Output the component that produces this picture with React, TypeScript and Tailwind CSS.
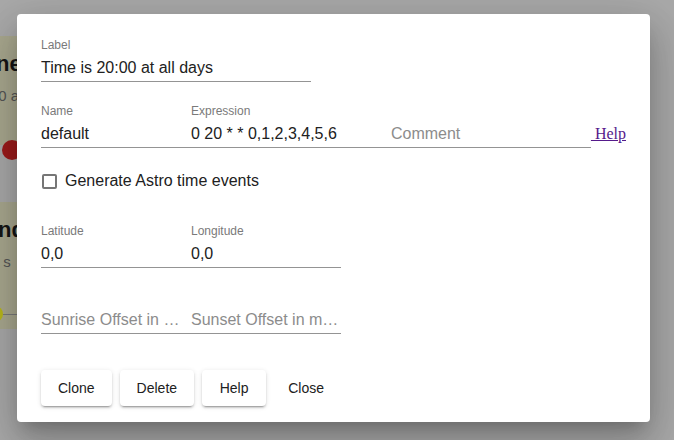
import React from "react";

const font = { fontFamily: '"Liberation Sans", Arial, Helvetica, sans-serif' };

function Field({
  label,
  value,
  placeholder,
  width,
}: {
  label?: string;
  value?: string;
  placeholder?: string;
  width: string;
}) {
  return (
    <div className={`flex flex-col ${width}`}>
      <div className="h-[14px] text-[12px] leading-[14px] text-[#7a7a7a] whitespace-nowrap">
        {label ?? ""}
      </div>
      <div className="h-[30px] pt-px border-b border-[#949494] text-[16px] leading-[29px] whitespace-nowrap overflow-hidden">
        {value !== undefined ? (
          <span className="text-[#212121]">{value}</span>
        ) : (
          <span className="text-[#8c8c8c]">{placeholder}</span>
        )}
      </div>
    </div>
  );
}

function Btn({ children, flat }: { children: React.ReactNode; flat?: boolean }) {
  return (
    <button
      className={`h-9 min-w-16 rounded-[4px] text-[14px] text-[#212121] ${
        flat
          ? "bg-transparent px-[14px]"
          : "bg-white px-[17px] shadow-[0px_3px_1px_-2px_rgba(0,0,0,0.2),0px_2px_2px_0px_rgba(0,0,0,0.14),0px_1px_5px_0px_rgba(0,0,0,0.12)]"
      }`}
    >
      {children}
    </button>
  );
}

export default function App() {
  return (
    <div
      className="relative w-[674px] h-[440px] overflow-hidden bg-[#a9a9a9]"
      style={font}
    >
      {/* background content */}
      <div className="flex flex-col pt-[36px]">
        <div className="relative -ml-[300px] w-[500px] h-[109px] bg-[#a9a88f] rounded-[4px]">
          <div className="absolute left-[279px] top-[14px] text-[22px] font-bold text-[#151515] leading-[28px]">
            One
          </div>
          <div className="absolute left-[269px] top-[50px] text-[15px] text-[#555] leading-[20px]">
            20:00 at
          </div>
          <div className="absolute left-[302px] top-[104px] w-[20px] h-[20px] rounded-full bg-[#9c1b1b]" />
        </div>
        <div className="relative -ml-[300px] w-[500px] h-[127px] mt-[57px] bg-[#a9a88f] rounded-[4px]">
          <div className="absolute left-[270px] top-[14px] text-[22px] font-bold text-[#151515] leading-[28px]">
            Sund
          </div>
          <div className="absolute left-[284px] top-[50px] text-[15px] text-[#555] leading-[20px]">
            ys s
          </div>
          <div className="absolute left-[303px] top-[112px] w-[20px] h-px bg-[#7a7a7a]" />
          <div className="absolute left-[287px] top-[104px] w-[16px] h-[16px] rounded-full bg-[#b9b81a]" />
        </div>
      </div>

      {/* dialog */}
      <div className="absolute left-[17px] top-[14px] w-[633px] bg-white rounded-[4px] shadow-[0px_11px_15px_-7px_rgba(0,0,0,0.2),0px_24px_38px_3px_rgba(0,0,0,0.14),0px_9px_46px_8px_rgba(0,0,0,0.12)] px-6 pt-6 pb-4">
        <Field label="Label" value="Time is 20:00 at all days" width="w-[270px]" />

        <div className="flex mt-[22px]">
          <Field label="Name" value="default" width="w-[150px]" />
          <Field label="Expression" value="0 20 * * 0,1,2,3,4,5,6" width="w-[200px]" />
          <Field placeholder="Comment" width="w-[200px]" />
          <a
            href="#"
            className="self-end h-[30px] pt-px text-[16px] leading-[29px] underline text-[#551a8b] whitespace-pre"
            style={{ fontFamily: '"Liberation Serif", "Times New Roman", serif' }}
          >
            {" Help"}
          </a>
        </div>

        <div className="flex items-center h-[24px] mt-[21px] gap-2">
          <div className="w-[15px] h-[15px] ml-[1px] border-2 border-[#767676] rounded-[2px]" />
          <span className="text-[16px] text-[#212121]">Generate Astro time events</span>
        </div>

        <div className="flex mt-[31px]">
          <Field label="Latitude" value="0,0" width="w-[150px]" />
          <Field label="Longitude" value="0,0" width="w-[150px]" />
        </div>

        <div className="flex mt-[22px]">
          <Field placeholder="Sunrise Offset in …" width="w-[150px]" />
          <Field placeholder="Sunset Offset in m…" width="w-[150px]" />
        </div>

        <div className="flex gap-2 mt-[36px]">
          <Btn>Clone</Btn>
          <Btn>Delete</Btn>
          <Btn>Help</Btn>
          <Btn flat>Close</Btn>
        </div>
      </div>
    </div>
  );
}
